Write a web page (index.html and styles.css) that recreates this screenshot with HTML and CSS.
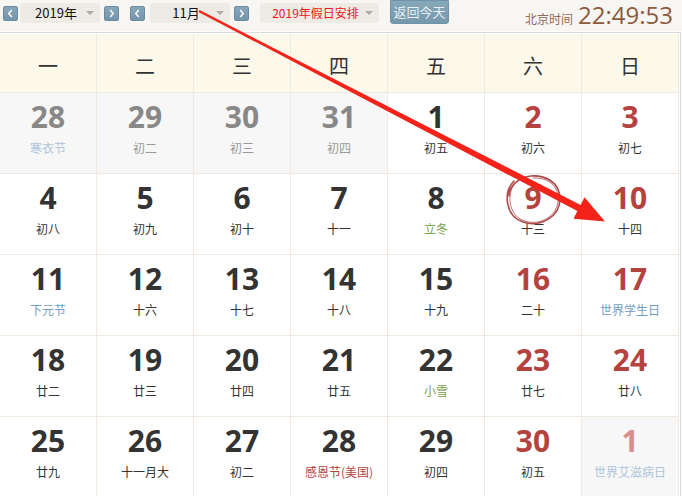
FILE: index.html
```html
<!DOCTYPE html>
<html lang="zh-CN">
<head>
<meta charset="utf-8">
<title>万年历</title>
<link rel="stylesheet" href="styles.css">
</head>
<body>
<div class="page">
  <div class="toolbar">
    <button class="arrow first" aria-label="上一年"><svg viewBox="0 0 15 15" width="15" height="15"><polyline points="9,3.5 5.5,7.5 9,11.5" /></svg></button>
    <div class="select year"><span class="label">2019年</span><span class="caret"></span></div>
    <button class="arrow gap4" aria-label="下一年"><svg viewBox="0 0 15 15" width="15" height="15"><polyline points="6,3.5 9.5,7.5 6,11.5" /></svg></button>
    <button class="arrow gap11" aria-label="上一月"><svg viewBox="0 0 15 15" width="15" height="15"><polyline points="9,3.5 5.5,7.5 9,11.5" /></svg></button>
    <div class="select month gap5"><span class="label">11月</span><span class="caret"></span></div>
    <button class="arrow gap4" aria-label="下一月"><svg viewBox="0 0 15 15" width="15" height="15"><polyline points="6,3.5 9.5,7.5 6,11.5" /></svg></button>
    <div class="select holiday gap11"><span class="label">2019年假日安排</span><span class="caret"></span></div>
    <button class="today gap11">返回今天</button>
    <div class="clock"><span class="clock-label">北京时间</span><span class="clock-time">22:49:53</span></div>
  </div>

  <div class="calendar">
    <div class="week">
      <div class="wd">一</div><div class="wd">二</div><div class="wd">三</div><div class="wd">四</div><div class="wd">五</div><div class="wd">六</div><div class="wd">日</div>
    </div>
    <div class="days">
      <div class="day other"><span class="num">28</span><span class="lunar fest-light">寒衣节</span></div>
      <div class="day other"><span class="num">29</span><span class="lunar">初二</span></div>
      <div class="day other"><span class="num">30</span><span class="lunar">初三</span></div>
      <div class="day other"><span class="num">31</span><span class="lunar">初四</span></div>
      <div class="day"><span class="num">1</span><span class="lunar">初五</span></div>
      <div class="day red"><span class="num">2</span><span class="lunar">初六</span></div>
      <div class="day red"><span class="num">3</span><span class="lunar">初七</span></div>

      <div class="day"><span class="num">4</span><span class="lunar">初八</span></div>
      <div class="day"><span class="num">5</span><span class="lunar">初九</span></div>
      <div class="day"><span class="num">6</span><span class="lunar">初十</span></div>
      <div class="day"><span class="num">7</span><span class="lunar">十一</span></div>
      <div class="day"><span class="num">8</span><span class="lunar term">立冬</span></div>
      <div class="day red"><span class="num">9</span><span class="lunar">十三</span></div>
      <div class="day red"><span class="num">10</span><span class="lunar">十四</span></div>

      <div class="day"><span class="num">11</span><span class="lunar fest">下元节</span></div>
      <div class="day"><span class="num">12</span><span class="lunar">十六</span></div>
      <div class="day"><span class="num">13</span><span class="lunar">十七</span></div>
      <div class="day"><span class="num">14</span><span class="lunar">十八</span></div>
      <div class="day"><span class="num">15</span><span class="lunar">十九</span></div>
      <div class="day red"><span class="num">16</span><span class="lunar">二十</span></div>
      <div class="day red"><span class="num">17</span><span class="lunar fest">世界学生日</span></div>

      <div class="day"><span class="num">18</span><span class="lunar">廿二</span></div>
      <div class="day"><span class="num">19</span><span class="lunar">廿三</span></div>
      <div class="day"><span class="num">20</span><span class="lunar">廿四</span></div>
      <div class="day"><span class="num">21</span><span class="lunar">廿五</span></div>
      <div class="day"><span class="num">22</span><span class="lunar term">小雪</span></div>
      <div class="day red"><span class="num">23</span><span class="lunar">廿七</span></div>
      <div class="day red"><span class="num">24</span><span class="lunar">廿八</span></div>

      <div class="day"><span class="num">25</span><span class="lunar">廿九</span></div>
      <div class="day"><span class="num">26</span><span class="lunar">十一月大</span></div>
      <div class="day"><span class="num">27</span><span class="lunar">初二</span></div>
      <div class="day"><span class="num">28</span><span class="lunar fest-red">感恩节(美国)</span></div>
      <div class="day"><span class="num">29</span><span class="lunar">初四</span></div>
      <div class="day red"><span class="num">30</span><span class="lunar">初五</span></div>
      <div class="day next"><span class="num">1</span><span class="lunar fest-light">世界艾滋病日</span></div>
    </div>
  </div>

  <svg class="overlay" viewBox="0 0 682 496" width="682" height="496" aria-hidden="true">
    <path class="mark-circle" d="M 514 181 C 503 192, 505 216, 523 222 C 541 228, 560 216, 560 199 C 560 182, 545 175, 531 176 C 519 177, 509 186, 509 196" />
    <path class="mark-circle thin" d="M 520 179 C 507 186, 506 210, 520 219 C 536 228, 556 218, 558 202 C 560 186, 548 177, 533 178" />
    <polygon class="mark-arrow" points="198.5,11.9 199.5,10.1 580.6,204.9 584.5,197.3 605,221.5 573.5,218.7 577.4,211.1" />
  </svg>
</div>
</body>
</html>
```

FILE: styles.css
```css
html, body {
  margin: 0;
  padding: 0;
  background: #ffffff;
}

body {
  width: 682px;
  height: 496px;
  overflow: hidden;
  font-family: "Noto Sans CJK SC", "Noto Sans", sans-serif;
  color: #333333;
}

.page {
  position: relative;
  width: 682px;
  height: 496px;
  overflow: hidden;
}

/* ---------- toolbar ---------- */
.toolbar {
  display: flex;
  align-items: flex-start;
  height: 31px;
  padding-left: 2px;
  background: #f8f6f2;
  box-sizing: border-box;
}

.arrow {
  width: 15px;
  height: 15px;
  margin-top: 6px;
  padding: 0;
  border: 1px solid #6a8ca2;
  border-radius: 2px;
  background: linear-gradient(#87a7bb, #7395ab);
  box-sizing: border-box;
  display: flex;
  align-items: center;
  justify-content: center;
}

.arrow svg {
  display: block;
  width: 13px;
  height: 13px;
}

.arrow polyline {
  fill: none;
  stroke: #ffffff;
  stroke-width: 1.7;
}

.first { margin-left: 1px; }
.gap4 { margin-left: 4px; }
.gap5 { margin-left: 5px; }
.gap11 { margin-left: 11px; }

.select {
  display: flex;
  align-items: center;
  height: 20px;
  margin-top: 3px;
  padding-right: 6px;
  border-radius: 3px;
  background: #eeeae4;
  box-sizing: border-box;
  font-size: 13px;
  color: #111111;
}

.year { width: 80px; margin-left: 2px; }
.month { width: 80px; }
.holiday { width: 119px; font-size: 12px; color: #f0141e; }

.select .label {
  flex: 1;
  text-align: center;
  padding-left: 6px;
  line-height: 20px;
}

.caret {
  width: 0;
  height: 0;
  border-left: 4px solid transparent;
  border-right: 4px solid transparent;
  border-top: 4px solid #aaaaaa;
}

.today {
  width: 59px;
  height: 24px;
  margin-top: 0;
  padding: 0;
  border: 1px solid #6f92a7;
  border-radius: 0 0 3px 3px;
  background: linear-gradient(#86a8bb, #7598ad);
  color: #e9eff3;
  font-family: "Noto Sans CJK SC", sans-serif;
  font-size: 13px;
  line-height: 20px;
  box-sizing: border-box;
}

.clock {
  margin-left: auto;
  margin-right: 9px;
  display: flex;
  align-items: baseline;
  gap: 5px;
  margin-top: 0;
}

.clock-label {
  font-size: 12px;
  color: #8a6d5e;
}

.clock-time {
  font-family: "Open Sans", "Liberation Sans", sans-serif;
  font-size: 24px;
  line-height: 29px;
  color: #8d5a3c;
}

/* ---------- calendar ---------- */
.calendar {
  width: 681px;
  margin-top: 1px;
  border-top: 1px solid #d9d9d9;
  border-right: 1px solid #d9d9d9;
  padding-top: 1px;
  box-sizing: border-box;
}

.week,
.days {
  display: grid;
  grid-template-columns: repeat(7, 97px);
}

.wd {
  height: 59px;
  box-sizing: border-box;
  border-right: 1px solid #efe9e0;
  border-bottom: 1px solid #efe9e0;
  background: #fdf9ea;
  display: flex;
  align-items: center;
  justify-content: center;
  padding-top: 4px;
  font-size: 20px;
  color: #333333;
}

.day {
  height: 81px;
  box-sizing: border-box;
  border-right: 1px solid #efe9e0;
  border-bottom: 1px solid #efe9e0;
  background: #ffffff;
  display: flex;
  flex-direction: column;
  align-items: center;
  padding-top: 9px;
}

.num {
  font-family: "Open Sans", "Noto Sans", sans-serif;
  font-weight: 700;
  font-size: 30px;
  line-height: 30px;
  color: #333333;
}

.lunar {
  margin-top: 8px;
  font-size: 12px;
  line-height: 16px;
  color: #333333;
  white-space: nowrap;
}

.red .num { color: #b4423f; }

.other { background: #f7f7f7; }
.other .num { color: #888888; }
.other .lunar { color: #999999; }

.next { background: #f7f7f7; }
.next .num { color: #d88e8e; }

.fest { color: #6f9dc6; }
.other .fest-light,
.next .fest-light,
.fest-light { color: #adc5da; }
.term { color: #79a14c; }
.fest-red { color: #b4423f; }

/* ---------- annotation overlay ---------- */
.overlay {
  position: absolute;
  left: 0;
  top: 0;
  pointer-events: none;
}

.mark-circle {
  fill: none;
  stroke: #b0484a;
  stroke-width: 1.6;
  stroke-linecap: round;
}

.mark-circle.thin {
  stroke-width: 1;
  opacity: 0.8;
}

.mark-arrow {
  fill: #f4231a;
}
```
